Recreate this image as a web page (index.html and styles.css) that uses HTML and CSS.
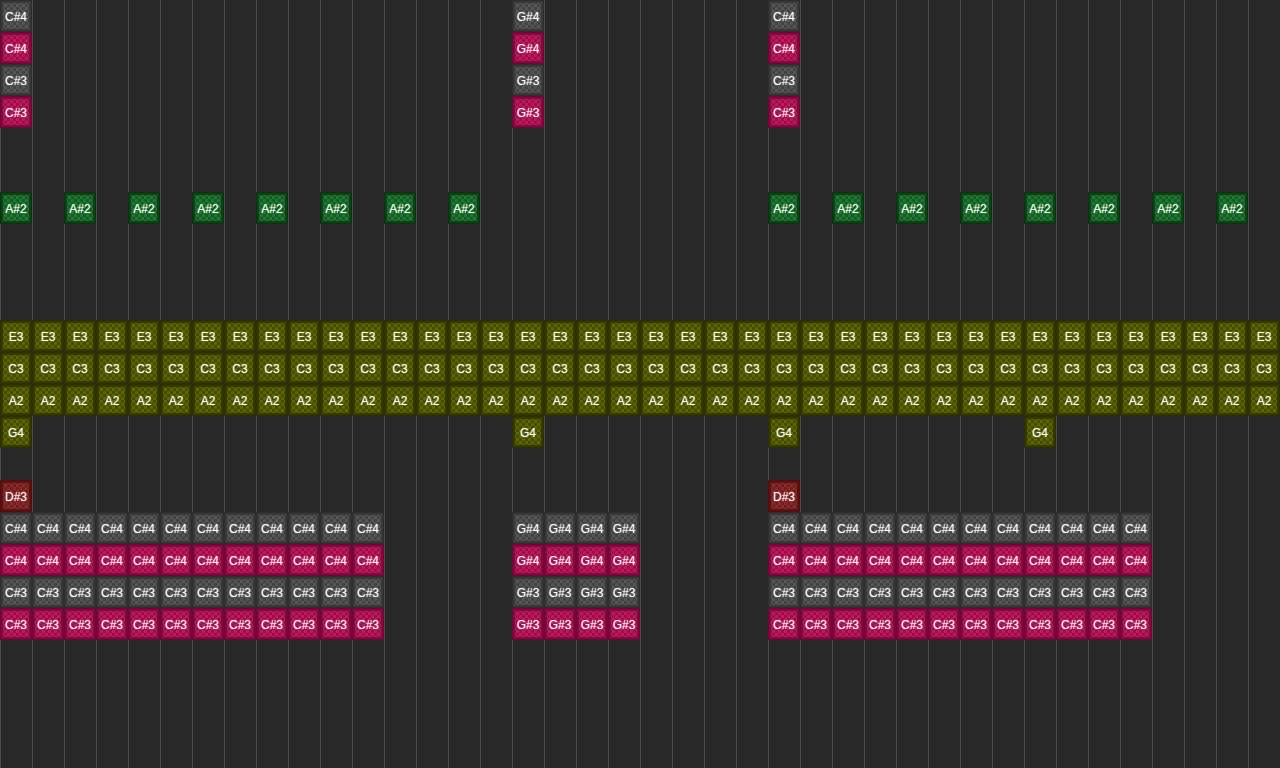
FILE: index.html
```html
<!DOCTYPE html>
<html lang="en">
<head>
<meta charset="utf-8">
<title>Piano roll</title>
<link rel="stylesheet" href="styles.css">
</head>
<body>
<main class="roll">
<div class="row"><b class="n gy">C#4</b><b class="n gy c17">G#4</b><b class="n gy c25">C#4</b></div>
<div class="row"><b class="n pk">C#4</b><b class="n pk c17">G#4</b><b class="n pk c25">C#4</b></div>
<div class="row"><b class="n gy">C#3</b><b class="n gy c17">G#3</b><b class="n gy c25">C#3</b></div>
<div class="row"><b class="n pk">C#3</b><b class="n pk c17">G#3</b><b class="n pk c25">C#3</b></div>
<div class="row"></div>
<div class="row"></div>
<div class="row"><b class="n gr">A#2</b><b class="n gr c3">A#2</b><b class="n gr c5">A#2</b><b class="n gr c7">A#2</b><b class="n gr c9">A#2</b><b class="n gr c11">A#2</b><b class="n gr c13">A#2</b><b class="n gr c15">A#2</b><b class="n gr c25">A#2</b><b class="n gr c27">A#2</b><b class="n gr c29">A#2</b><b class="n gr c31">A#2</b><b class="n gr c33">A#2</b><b class="n gr c35">A#2</b><b class="n gr c37">A#2</b><b class="n gr c39">A#2</b></div>
<div class="row"></div>
<div class="row"></div>
<div class="row"></div>
<div class="row"><b class="n ol">E3</b><b class="n ol">E3</b><b class="n ol">E3</b><b class="n ol">E3</b><b class="n ol">E3</b><b class="n ol">E3</b><b class="n ol">E3</b><b class="n ol">E3</b><b class="n ol">E3</b><b class="n ol">E3</b><b class="n ol">E3</b><b class="n ol">E3</b><b class="n ol">E3</b><b class="n ol">E3</b><b class="n ol">E3</b><b class="n ol">E3</b><b class="n ol">E3</b><b class="n ol">E3</b><b class="n ol">E3</b><b class="n ol">E3</b><b class="n ol">E3</b><b class="n ol">E3</b><b class="n ol">E3</b><b class="n ol">E3</b><b class="n ol">E3</b><b class="n ol">E3</b><b class="n ol">E3</b><b class="n ol">E3</b><b class="n ol">E3</b><b class="n ol">E3</b><b class="n ol">E3</b><b class="n ol">E3</b><b class="n ol">E3</b><b class="n ol">E3</b><b class="n ol">E3</b><b class="n ol">E3</b><b class="n ol">E3</b><b class="n ol">E3</b><b class="n ol">E3</b><b class="n ol">E3</b></div>
<div class="row"><b class="n ol">C3</b><b class="n ol">C3</b><b class="n ol">C3</b><b class="n ol">C3</b><b class="n ol">C3</b><b class="n ol">C3</b><b class="n ol">C3</b><b class="n ol">C3</b><b class="n ol">C3</b><b class="n ol">C3</b><b class="n ol">C3</b><b class="n ol">C3</b><b class="n ol">C3</b><b class="n ol">C3</b><b class="n ol">C3</b><b class="n ol">C3</b><b class="n ol">C3</b><b class="n ol">C3</b><b class="n ol">C3</b><b class="n ol">C3</b><b class="n ol">C3</b><b class="n ol">C3</b><b class="n ol">C3</b><b class="n ol">C3</b><b class="n ol">C3</b><b class="n ol">C3</b><b class="n ol">C3</b><b class="n ol">C3</b><b class="n ol">C3</b><b class="n ol">C3</b><b class="n ol">C3</b><b class="n ol">C3</b><b class="n ol">C3</b><b class="n ol">C3</b><b class="n ol">C3</b><b class="n ol">C3</b><b class="n ol">C3</b><b class="n ol">C3</b><b class="n ol">C3</b><b class="n ol">C3</b></div>
<div class="row"><b class="n ol">A2</b><b class="n ol">A2</b><b class="n ol">A2</b><b class="n ol">A2</b><b class="n ol">A2</b><b class="n ol">A2</b><b class="n ol">A2</b><b class="n ol">A2</b><b class="n ol">A2</b><b class="n ol">A2</b><b class="n ol">A2</b><b class="n ol">A2</b><b class="n ol">A2</b><b class="n ol">A2</b><b class="n ol">A2</b><b class="n ol">A2</b><b class="n ol">A2</b><b class="n ol">A2</b><b class="n ol">A2</b><b class="n ol">A2</b><b class="n ol">A2</b><b class="n ol">A2</b><b class="n ol">A2</b><b class="n ol">A2</b><b class="n ol">A2</b><b class="n ol">A2</b><b class="n ol">A2</b><b class="n ol">A2</b><b class="n ol">A2</b><b class="n ol">A2</b><b class="n ol">A2</b><b class="n ol">A2</b><b class="n ol">A2</b><b class="n ol">A2</b><b class="n ol">A2</b><b class="n ol">A2</b><b class="n ol">A2</b><b class="n ol">A2</b><b class="n ol">A2</b><b class="n ol">A2</b></div>
<div class="row"><b class="n ol">G4</b><b class="n ol c17">G4</b><b class="n ol c25">G4</b><b class="n ol c33">G4</b></div>
<div class="row"></div>
<div class="row"><b class="n rd">D#3</b><b class="n rd c25">D#3</b></div>
<div class="row"><b class="n gy">C#4</b><b class="n gy">C#4</b><b class="n gy">C#4</b><b class="n gy">C#4</b><b class="n gy">C#4</b><b class="n gy">C#4</b><b class="n gy">C#4</b><b class="n gy">C#4</b><b class="n gy">C#4</b><b class="n gy">C#4</b><b class="n gy">C#4</b><b class="n gy">C#4</b><b class="n gy c17">G#4</b><b class="n gy">G#4</b><b class="n gy">G#4</b><b class="n gy">G#4</b><b class="n gy c25">C#4</b><b class="n gy">C#4</b><b class="n gy">C#4</b><b class="n gy">C#4</b><b class="n gy">C#4</b><b class="n gy">C#4</b><b class="n gy">C#4</b><b class="n gy">C#4</b><b class="n gy">C#4</b><b class="n gy">C#4</b><b class="n gy">C#4</b><b class="n gy">C#4</b></div>
<div class="row"><b class="n pk">C#4</b><b class="n pk">C#4</b><b class="n pk">C#4</b><b class="n pk">C#4</b><b class="n pk">C#4</b><b class="n pk">C#4</b><b class="n pk">C#4</b><b class="n pk">C#4</b><b class="n pk">C#4</b><b class="n pk">C#4</b><b class="n pk">C#4</b><b class="n pk">C#4</b><b class="n pk c17">G#4</b><b class="n pk">G#4</b><b class="n pk">G#4</b><b class="n pk">G#4</b><b class="n pk c25">C#4</b><b class="n pk">C#4</b><b class="n pk">C#4</b><b class="n pk">C#4</b><b class="n pk">C#4</b><b class="n pk">C#4</b><b class="n pk">C#4</b><b class="n pk">C#4</b><b class="n pk">C#4</b><b class="n pk">C#4</b><b class="n pk">C#4</b><b class="n pk">C#4</b></div>
<div class="row"><b class="n gy">C#3</b><b class="n gy">C#3</b><b class="n gy">C#3</b><b class="n gy">C#3</b><b class="n gy">C#3</b><b class="n gy">C#3</b><b class="n gy">C#3</b><b class="n gy">C#3</b><b class="n gy">C#3</b><b class="n gy">C#3</b><b class="n gy">C#3</b><b class="n gy">C#3</b><b class="n gy c17">G#3</b><b class="n gy">G#3</b><b class="n gy">G#3</b><b class="n gy">G#3</b><b class="n gy c25">C#3</b><b class="n gy">C#3</b><b class="n gy">C#3</b><b class="n gy">C#3</b><b class="n gy">C#3</b><b class="n gy">C#3</b><b class="n gy">C#3</b><b class="n gy">C#3</b><b class="n gy">C#3</b><b class="n gy">C#3</b><b class="n gy">C#3</b><b class="n gy">C#3</b></div>
<div class="row"><b class="n pk">C#3</b><b class="n pk">C#3</b><b class="n pk">C#3</b><b class="n pk">C#3</b><b class="n pk">C#3</b><b class="n pk">C#3</b><b class="n pk">C#3</b><b class="n pk">C#3</b><b class="n pk">C#3</b><b class="n pk">C#3</b><b class="n pk">C#3</b><b class="n pk">C#3</b><b class="n pk c17">G#3</b><b class="n pk">G#3</b><b class="n pk">G#3</b><b class="n pk">G#3</b><b class="n pk c25">C#3</b><b class="n pk">C#3</b><b class="n pk">C#3</b><b class="n pk">C#3</b><b class="n pk">C#3</b><b class="n pk">C#3</b><b class="n pk">C#3</b><b class="n pk">C#3</b><b class="n pk">C#3</b><b class="n pk">C#3</b><b class="n pk">C#3</b><b class="n pk">C#3</b></div>
<div class="row"></div>
<div class="row"></div>
<div class="row"></div>
<div class="row"></div>
</main>
</body>
</html>
```
FILE: styles.css
```css
html, body {
  margin: 0;
  height: 100%;
  overflow: hidden;
  background: #282829;
}
.roll {
  width: 1280px;
  height: 768px;
  overflow: hidden;
  display: grid;
  grid-auto-rows: 32px;
  background-color: #282829;
  background-image: linear-gradient(to right, #4a4a4a 1px, transparent 1px);
  background-size: 32px 100%;
}
.row {
  display: grid;
  grid-template-columns: repeat(40, 32px);
  grid-template-rows: 32px;
}
.n {
  box-sizing: border-box;
  width: 32px;
  height: 32px;
  padding-top: 2px;
  border: 1px solid;
  display: flex;
  align-items: center;
  justify-content: center;
  font: 400 12px/1 "Liberation Sans", Arial, sans-serif;
  color: #fff;
  text-shadow: 0 0 1px rgba(255, 255, 255, 0.45);
  background-size: 6px 6px;
  background-position: 0 0;
}
.gy { border-color: #2c2c2c; box-shadow: inset 0 0 0 2px #393939; background-color: #565656; background-image: conic-gradient(#424242 25%, transparent 0 50%, #424242 0 75%, transparent 0); }
.pk { border-color: #6a0736; box-shadow: inset 0 0 0 2px #800a3e; background-color: #c4185c; background-image: conic-gradient(#981049 25%, transparent 0 50%, #981049 0 75%, transparent 0); }
.gr { border-color: #0b3012; box-shadow: inset 0 0 0 2px #0d4016; background-color: #1e7a2e; background-image: conic-gradient(#165a24 25%, transparent 0 50%, #165a24 0 75%, transparent 0); }
.ol { border-color: #2a2f04; box-shadow: inset 0 0 0 2px #333a00; background-color: #5f6800; background-image: conic-gradient(#444b00 25%, transparent 0 50%, #444b00 0 75%, transparent 0); }
.rd { border-color: #4c1010; box-shadow: inset 0 0 0 2px #5c1212; background-color: #8c2a2a; background-image: conic-gradient(#701f1f 25%, transparent 0 50%, #701f1f 0 75%, transparent 0); }
.c3 { grid-column-start: 3; }
.c5 { grid-column-start: 5; }
.c7 { grid-column-start: 7; }
.c9 { grid-column-start: 9; }
.c11 { grid-column-start: 11; }
.c13 { grid-column-start: 13; }
.c15 { grid-column-start: 15; }
.c17 { grid-column-start: 17; }
.c25 { grid-column-start: 25; }
.c27 { grid-column-start: 27; }
.c29 { grid-column-start: 29; }
.c31 { grid-column-start: 31; }
.c33 { grid-column-start: 33; }
.c35 { grid-column-start: 35; }
.c37 { grid-column-start: 37; }
.c39 { grid-column-start: 39; }
```
